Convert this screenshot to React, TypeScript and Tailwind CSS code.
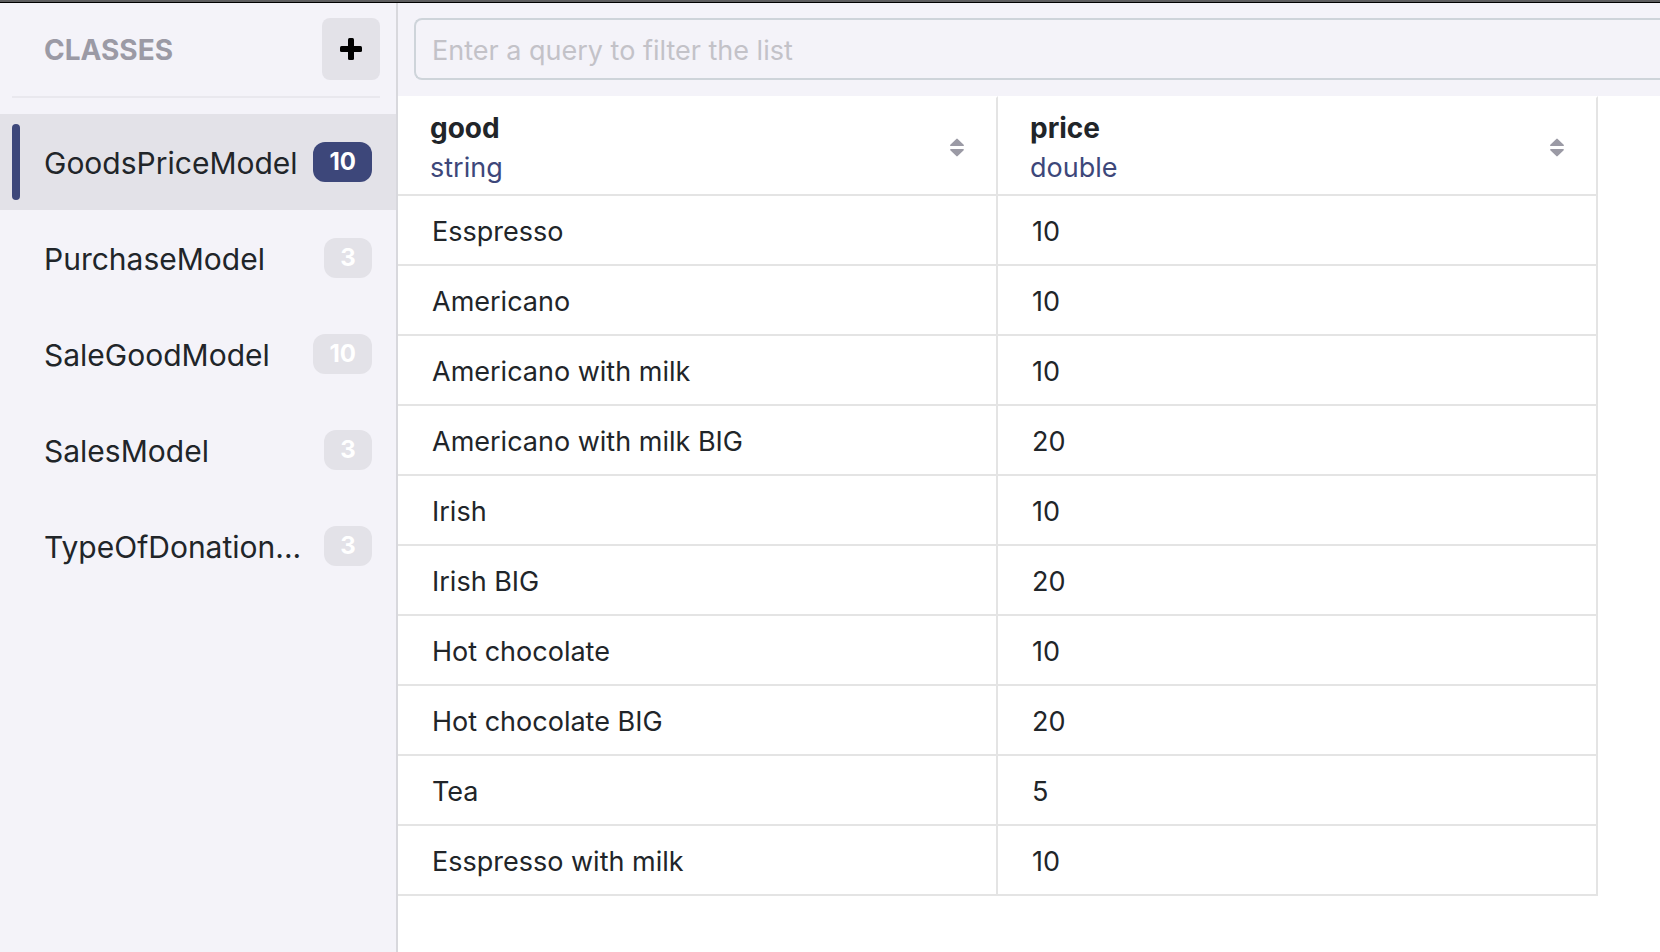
import React from "react";

const classes = [
  { name: "GoodsPriceModel", count: 10 },
  { name: "PurchaseModel", count: 3 },
  { name: "SaleGoodModel", count: 10 },
  { name: "SalesModel", count: 3 },
  { name: "TypeOfDonation...", count: 3 },
];

const columns = [
  { name: "good", type: "string" },
  { name: "price", type: "double" },
];

const rows: [string, number][] = [
  ["Esspresso", 10],
  ["Americano", 10],
  ["Americano with milk", 10],
  ["Americano with milk BIG", 20],
  ["Irish", 10],
  ["Irish BIG", 20],
  ["Hot chocolate", 10],
  ["Hot chocolate BIG", 20],
  ["Tea", 5],
  ["Esspresso with milk", 10],
];

function PlusIcon() {
  return (
    <svg width="22" height="22" viewBox="0 0 22 22" aria-hidden="true">
      <rect x="8" y="0" width="6" height="22" rx="1.5" />
      <rect x="0" y="8" width="22" height="6" rx="1.5" />
    </svg>
  );
}

function SortIcon() {
  return (
    <svg width="14" height="20" viewBox="0 0 14 20" fill="#9b9aa5" aria-hidden="true">
      <path d="M6.3 0.9 Q7 0.2 7.7 0.9 L13.7 6.8 Q14.2 8 13.2 8 H0.8 Q-0.2 8 0.3 6.8 Z" />
      <path d="M6.3 18.1 Q7 18.8 7.7 18.1 L13.7 12.2 Q14.2 11 13.2 11 H0.8 Q-0.2 11 0.3 12.2 Z" />
    </svg>
  );
}

function Sidebar() {
  return (
    <aside className="w-[398px] shrink-0 border-r-2 border-[#d8d8dd] bg-[#f4f3f9]">
      <div className="ml-3 mr-4 flex items-center justify-between border-b-2 border-[#e9e8ee] pt-[15px] pb-4 pl-8">
        <h2 className="pt-0.5 text-[28px] leading-8 font-bold text-[#9b9aa5]">CLASSES</h2>
        <button
          type="button"
          aria-label="Add class"
          className="flex h-[62px] w-[58px] items-center justify-center rounded-lg bg-[#e3e2e8]"
        >
          <PlusIcon />
        </button>
      </div>
      <nav className="mt-4">
        {classes.map((item, i) => (
          <a
            key={item.name}
            href="#"
            aria-current={i === 0 ? "page" : undefined}
            className={`flex h-24 items-center pl-3 pr-6 ${i === 0 ? "bg-[#e3e2e8]" : ""}`}
          >
            <span className={`h-[76px] w-2 shrink-0 rounded ${i === 0 ? "bg-[#3d477a]" : ""}`} />
            <span className="ml-6 min-w-0 flex-1 pt-0.5 text-3xl leading-10 whitespace-nowrap text-[#212529]">
              {item.name}
            </span>
            <span
              className={`flex h-10 min-w-12 shrink-0 items-center justify-center rounded-xl px-4 text-2xl leading-none font-bold text-white ${
                i === 0 ? "bg-[#3d477a]" : "bg-[#e3e2e8]"
              }`}
            >
              {item.count}
            </span>
          </a>
        ))}
      </nav>
    </aside>
  );
}

function DataTable() {
  return (
    <table className="w-[1200px] table-fixed border-separate border-spacing-0 text-left text-[#212529]">
      <thead>
        <tr>
          {columns.map((column) => (
            <th
              key={column.name}
              scope="col"
              className="h-[100px] border-t-2 border-r-2 border-b-2 border-[#e4e4e4] border-t-white pt-1 pr-8 pb-0 pl-8 font-normal"
            >
              <div className="flex items-center justify-between">
                <div className="leading-10">
                  <div className="text-[28px] font-bold">{column.name}</div>
                  <div className="text-[27px] text-[#3d477a]">{column.type}</div>
                </div>
                <button type="button" aria-label={`Sort by ${column.name}`}>
                  <SortIcon />
                </button>
              </div>
            </th>
          ))}
        </tr>
      </thead>
      <tbody>
        {rows.map(([good, price]) => (
          <tr key={good}>
            <td className="h-[70px] border-r-2 border-b-2 border-[#e4e4e4] px-[34px] pt-1 pb-0 text-[27px] leading-10">
              {good}
            </td>
            <td className="h-[70px] border-r-2 border-b-2 border-[#e4e4e4] px-[34px] pt-1 pb-0 text-[27px] leading-10">
              {price}
            </td>
          </tr>
        ))}
      </tbody>
    </table>
  );
}

export default function App() {
  return (
    <div className="flex min-h-screen flex-col overflow-hidden bg-white font-['Inter','Liberation_Sans',sans-serif]">
      <div className="h-[3px] border-b border-black bg-[#5d5d5f]" />
      <div className="flex flex-1">
        <Sidebar />
        <main className="min-w-0 flex-1">
          <div className="bg-[#f4f3f9] pt-[15px] pb-4 pl-4">
            <input
              type="text"
              aria-label="Filter query"
              placeholder="Enter a query to filter the list"
              className="block h-[62px] w-full rounded-l-lg border-2 border-r-0 border-[#ced4da] bg-transparent px-4 pt-0.5 text-[27px] text-[#212529] outline-none placeholder:text-[#c3c2c8]"
            />
          </div>
          <DataTable />
        </main>
      </div>
    </div>
  );
}
